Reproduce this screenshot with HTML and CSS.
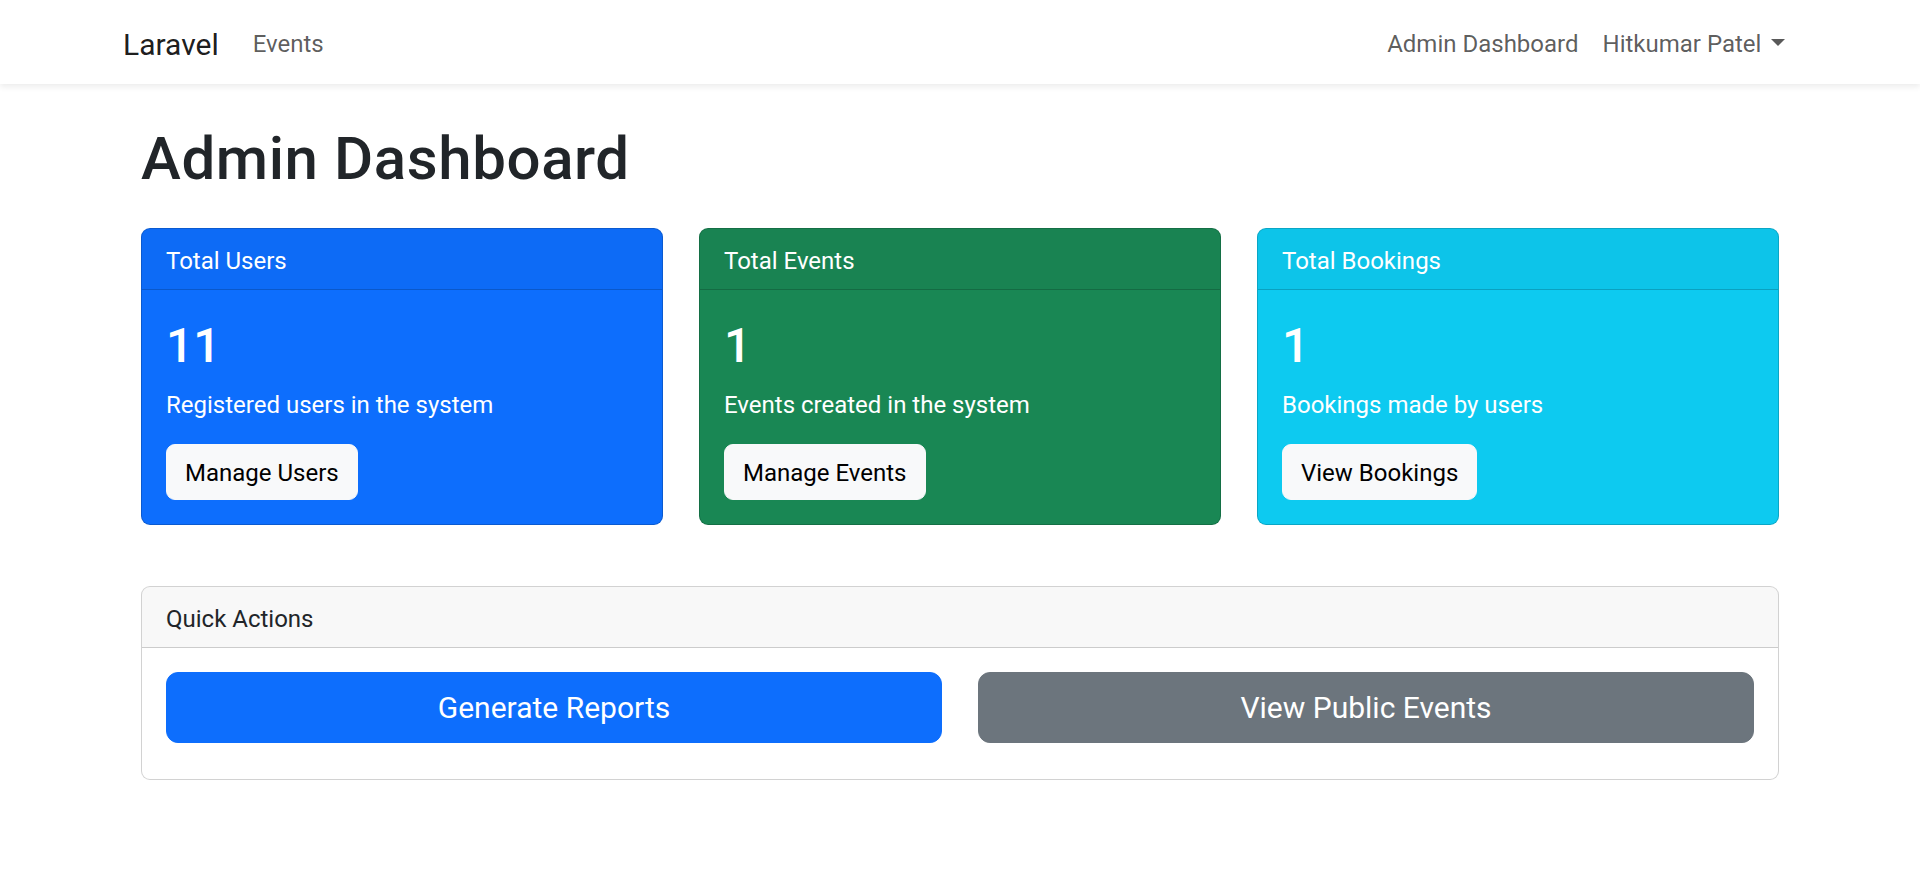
FILE: index.html
```html
<!DOCTYPE html>
<html lang="en">
<head>
<meta charset="utf-8">
<title>Admin Dashboard</title>
<link rel="stylesheet" href="styles.css">
</head>
<body>
<nav class="navbar">
  <div class="container nav-inner">
    <a class="brand" href="#">Laravel</a>
    <ul class="nav-list">
      <li><a class="nav-link" href="#">Events</a></li>
    </ul>
    <ul class="nav-list nav-right">
      <li><a class="nav-link" href="#">Admin Dashboard</a></li>
      <li><a class="nav-link dropdown-toggle" href="#">Hitkumar Patel</a></li>
    </ul>
  </div>
</nav>
<main class="main">
  <div class="container">
    <div class="content">
      <h1 class="title">Admin Dashboard</h1>
      <div class="stats">
        <div class="card card-primary">
          <div class="card-header">Total Users</div>
          <div class="card-body">
            <h2 class="card-title">11</h2>
            <p class="card-text">Registered users in the system</p>
            <a class="btn btn-light" href="#">Manage Users</a>
          </div>
        </div>
        <div class="card card-success">
          <div class="card-header">Total Events</div>
          <div class="card-body">
            <h2 class="card-title">1</h2>
            <p class="card-text">Events created in the system</p>
            <a class="btn btn-light" href="#">Manage Events</a>
          </div>
        </div>
        <div class="card card-info">
          <div class="card-header">Total Bookings</div>
          <div class="card-body">
            <h2 class="card-title">1</h2>
            <p class="card-text">Bookings made by users</p>
            <a class="btn btn-light" href="#">View Bookings</a>
          </div>
        </div>
      </div>
      <div class="card card-plain">
        <div class="card-header">Quick Actions</div>
        <div class="card-body">
          <div class="actions">
            <a class="btn btn-lg btn-primary" href="#">Generate Reports</a>
            <a class="btn btn-lg btn-secondary" href="#">View Public Events</a>
          </div>
        </div>
      </div>
    </div>
  </div>
</main>
</body>
</html>
```
FILE: styles.css
```css
* { box-sizing: border-box; }
html, body { margin: 0; padding: 0; }
body {
  font-family: Roboto, "Open Sans", sans-serif;
  font-size: 24px;
  line-height: 1.5;
  color: #212529;
  background: #fff;
}
a { text-decoration: none; }
.container {
  width: 1710px;
  margin: 0 auto;
  padding: 0 18px;
}
.navbar {
  background: #fff;
  padding: 12px 0;
  box-shadow: 0 3px 6px rgba(0,0,0,0.075);
}
.nav-inner {
  display: flex;
  align-items: center;
}
.brand {
  font-size: 30px;
  line-height: 45px;
  padding: 10px 0 5px;
  margin-right: 22px;
  color: rgba(0,0,0,0.9);
}
.nav-list {
  display: flex;
  list-style: none;
  margin: 0;
  padding: 0;
}
.nav-right { margin-left: auto; }
.nav-link {
  display: block;
  padding: 14px 12px 10px;
  color: rgba(0,0,0,0.65);
  line-height: 36px;
}
.dropdown-toggle::after {
  content: "";
  display: inline-block;
  margin-left: 0.4em;
  vertical-align: 0.255em;
  border-top: 0.3em solid;
  border-right: 0.3em solid transparent;
  border-left: 0.3em solid transparent;
  border-bottom: 0;
}
.main { padding-top: 36px; }
.content { padding: 0 18px; }
.title {
  font-size: 60px;
  font-weight: 500;
  line-height: 1.2;
  letter-spacing: 0.6px;
  margin: 0 0 36px;
  padding-top: 3px;
  height: 72px;
}
.stats {
  display: grid;
  grid-template-columns: repeat(3, 1fr);
  gap: 36px;
  margin-bottom: 61px;
}
.card {
  border: 1.5px solid rgba(0,0,0,0.175);
  border-radius: 9px;
  overflow: hidden;
}
.card-header {
  padding: 14px 24px 10px;
  line-height: 36px;
  background: rgba(33,37,41,0.03);
  border-bottom: 1.5px solid rgba(0,0,0,0.175);
}
.card-body { padding: 24px; }
.card-primary { background: #0d6efd; color: #fff; }
.card-success { background: #198754; color: #fff; }
.card-info { background: #0dcaf0; color: #fff; }
.card-title {
  font-size: 48px;
  font-weight: 500;
  line-height: 1.2;
  margin: 3px 0 12px;
}
.card-text { margin: 0 0 21px; }
.btn {
  display: inline-block;
  padding: 10px 18px 8px;
  font-size: 24px;
  line-height: 36px;
  border: 1.5px solid transparent;
  border-radius: 9px;
  text-align: center;
}
.btn-light { background: #f8f9fa; border-color: #f8f9fa; color: #000; }
.btn-lg {
  padding: 12px 24px;
  font-size: 30px;
  line-height: 45px;
  border-radius: 12px;
}
.btn-primary { background: #0d6efd; border-color: #0d6efd; color: #fff; }
.btn-secondary { background: #6c757d; border-color: #6c757d; color: #fff; }
.card-plain { background: #fff; }
.actions {
  display: grid;
  grid-template-columns: 1fr 1fr;
  gap: 36px;
  margin-bottom: 12px;
}
```
